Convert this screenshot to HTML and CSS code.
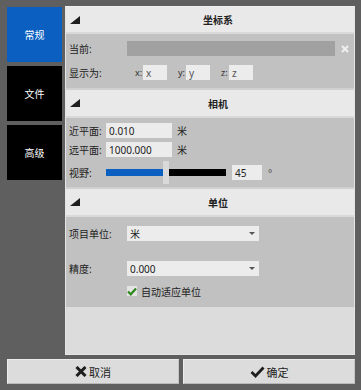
FILE: index.html
```html
<!DOCTYPE html>
<html lang="zh">
<head>
  <meta charset="UTF-8">
  <title>设置</title>
  <link rel="stylesheet" href="styles.css">
</head>
<body>
  <div class="dialog">
    <div class="main">
      <nav class="tabs">
        <div class="tab active">常规</div>
        <div class="tab">文件</div>
        <div class="tab">高级</div>
      </nav>

      <div class="panel">
        <section class="group first">
          <div class="group-head">
            <svg class="caret" width="11" height="8" viewBox="0 0 11 8"><polygon points="10,0 10,8 0,8" fill="#1e1e1e"/></svg>
            <span class="title">坐标系</span>
          </div>
          <div class="group-body coords">
            <div class="row">
              <span class="lbl wide">当前:</span>
              <div class="current"></div>
              <svg class="clear" width="8" height="8" viewBox="0 0 8 8"><path d="M1 1L7 7M7 1L1 7" stroke="#eeeeee" stroke-width="2.2"/></svg>
            </div>
            <div class="row">
              <span class="lbl wide">显示为:</span>
              <div class="axes">
                <span class="axis">x:</span><input class="field axis-field" value="x">
                <span class="axis">y:</span><input class="field axis-field" value="y">
                <span class="axis">z:</span><input class="field axis-field" value="z">
              </div>
            </div>
          </div>
        </section>

        <section class="group">
          <div class="group-head">
            <svg class="caret" width="11" height="8" viewBox="0 0 11 8"><polygon points="10,0 10,8 0,8" fill="#1e1e1e"/></svg>
            <span class="title">相机</span>
          </div>
          <div class="group-body camera">
            <div class="row">
              <span class="lbl">近平面:</span>
              <input class="field dist" value="0.010">
              <span class="unit">米</span>
            </div>
            <div class="row">
              <span class="lbl">远平面:</span>
              <input class="field dist" value="1000.000">
              <span class="unit">米</span>
            </div>
            <div class="row slider-row">
              <span class="lbl">视野:</span>
              <div class="slider">
                <div class="fill"></div>
                <div class="thumb"></div>
                <div class="rest"></div>
              </div>
              <input class="field fov" value="45">
              <span class="deg">°</span>
            </div>
          </div>
        </section>

        <section class="group">
          <div class="group-head">
            <svg class="caret" width="11" height="8" viewBox="0 0 11 8"><polygon points="10,0 10,8 0,8" fill="#1e1e1e"/></svg>
            <span class="title">单位</span>
          </div>
          <div class="group-body units">
            <div class="row">
              <span class="lbl wide">项目单位:</span>
              <div class="select"><span>米</span><span class="arrow"></span></div>
            </div>
            <div class="row">
              <span class="lbl wide">精度:</span>
              <div class="select"><span>0.000</span><span class="arrow"></span></div>
            </div>
            <div class="row check-row">
              <span class="box">
                <svg width="10" height="9" viewBox="0 0 10 9"><path d="M1 4.5L3.8 7.3L9 1.5" fill="none" stroke="#2f8a1e" stroke-width="2.2"/></svg>
              </span>
              <span>自动适应单位</span>
            </div>
          </div>
        </section>

        <div class="filler"></div>
      </div>
    </div>

    <div class="buttons">
      <button class="btn">
        <svg width="12" height="11" viewBox="0 0 12 11"><path d="M1.5 1L10.5 10M10.5 1L1.5 10" stroke="#1e1e1e" stroke-width="3"/></svg>
        取消
      </button>
      <button class="btn">
        <svg width="15" height="12" viewBox="0 0 15 12"><path d="M1.5 6L5.5 10L13.5 1.5" fill="none" stroke="#1e1e1e" stroke-width="2.8"/></svg>
        确定
      </button>
    </div>
  </div>
</body>
</html>
```

FILE: styles.css
```css
body {
  margin: 0;
  background: #5f5f5f;
  font-family: "Noto Sans", "Noto Sans CJK SC", sans-serif;
  font-size: 10px;
  color: #222;
}
.dialog {
  width: 361px;
  height: 390px;
  box-sizing: border-box;
  padding: 6px 6px 0 7px;
  display: flex;
  flex-direction: column;
  gap: 4px;
}
.main {
  display: flex;
  gap: 3px;
  height: 349px;
}
.tabs {
  display: flex;
  flex-direction: column;
  gap: 4px;
  margin-top: 1px;
  width: 55px;
}
.tab {
  height: 55px;
  background: #000;
  color: #fff;
  display: flex;
  align-items: center;
  justify-content: center;
}
.tab.active {
  background: #0b5fc0;
}
.panel {
  flex: 1;
  display: flex;
  flex-direction: column;
  background: #dcdcdc;
  border: 1px solid #e4e4e4;
  border-top-color: #f0f0f0;
}
.group-head {
  height: 26px;
  background: #e9e9e9;
  border-top: 2px solid #d0d0d0;
  border-bottom: 2px solid #d9d9d9;
  display: flex;
  align-items: center;
  padding-left: 4px;
}
.group.first .group-head {
  height: 25px;
  border-top: none;
}
.caret {
  flex: none;
}
.title {
  flex: 1;
  text-align: center;
  font-weight: bold;
  margin-left: 1px;
}
.group-body {
  background: #c1c1c1;
  padding: 0 0 0 3px;
  display: flex;
  flex-direction: column;
}
.coords {
  padding-top: 7px;
  padding-bottom: 8px;
  gap: 9px;
}
.camera {
  padding-top: 5px;
  padding-bottom: 3px;
  gap: 4px;
}
.units {
  padding-top: 9px;
  padding-bottom: 10px;
  gap: 20px;
}
.row {
  display: flex;
  align-items: center;
  height: 15px;
}
.lbl {
  width: 37px;
  flex: none;
}
.lbl.wide {
  width: 58px;
}
.current {
  width: 208px;
  height: 15px;
  background: #a1a1a1;
}
.clear {
  margin-left: 6px;
}
.axes {
  display: flex;
  align-items: center;
  margin-left: 8px;
}
.axis {
  width: 8px;
  font-size: 9px;
  color: #333;
}
.field {
  box-sizing: border-box;
  height: 15px;
  border: none;
  outline: none;
  background: #ececec;
  font-family: inherit;
  font-size: 10px;
  color: #222;
  padding: 0 0 0 3px;
  margin: 0;
}
.axis-field {
  width: 24px;
  margin-right: 11px;
  color: #555;
}
.dist {
  width: 66px;
}
.unit {
  margin-left: 5px;
}
.slider-row {
  height: 23px;
}
.slider {
  width: 120px;
  display: flex;
  align-items: center;
  height: 23px;
}
.fill {
  width: 57px;
  height: 7px;
  background: #0b5fc0;
}
.thumb {
  width: 6px;
  height: 23px;
  background: #d9d9d9;
}
.rest {
  flex: 1;
  height: 7px;
  background: #000;
}
.fov {
  width: 30px;
  margin-left: 6px;
}
.deg {
  margin-left: 6px;
  color: #555;
}
.select {
  width: 132px;
  height: 15px;
  background: #ececec;
  box-sizing: border-box;
  padding: 0 4px 0 3px;
  display: flex;
  align-items: center;
  justify-content: space-between;
}
.arrow {
  width: 0;
  height: 0;
  border-left: 3px solid transparent;
  border-right: 3px solid transparent;
  border-top: 3px solid #555;
}
.check-row {
  margin-top: -11px;
  height: 12px;
  padding-left: 58px;
  gap: 4px;
}
.box {
  width: 10px;
  height: 10px;
  background: #e4e4e4;
  display: flex;
  align-items: center;
  justify-content: center;
}
.filler {
  flex: 1;
  background: #dcdcdc;
}
.buttons {
  display: flex;
  gap: 4px;
  height: 25px;
}
.btn {
  flex: 1;
  background: #dcdcdc;
  border: 1px solid #ececec;
  border-bottom-color: #b8b8b8;
  border-right-color: #c4c4c4;
  font-family: inherit;
  font-size: 11px;
  color: #222;
  display: flex;
  align-items: center;
  justify-content: center;
  gap: 2px;
  padding: 0;
}
```
